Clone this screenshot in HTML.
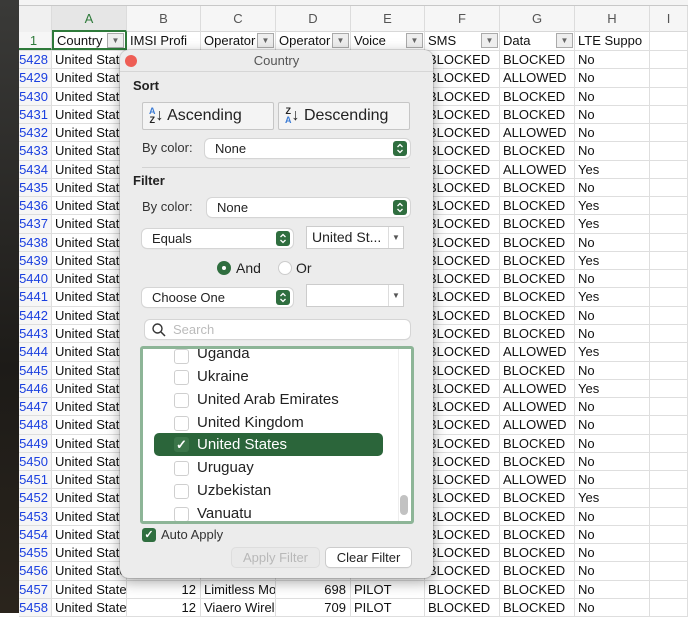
<!DOCTYPE html>
<html><head><meta charset="utf-8"><style>
*{box-sizing:border-box;margin:0;padding:0}
body{width:688px;height:613px;overflow:hidden;background:#fff;font-family:"Liberation Sans",sans-serif;position:relative}
.dark{position:absolute;left:0;top:0;width:19px;height:613px;background:linear-gradient(#3a3a38,#1d1b18 60%,#2a241c)}
.top{position:absolute;left:19px;top:0;width:669px;height:6px;background:#f4f4f4;border-bottom:1px solid #c8c8c8}
.colhdr{position:absolute;left:19px;top:6px;height:26px;width:669px;background:#f6f6f6;border-bottom:1px solid #d8d8d8;display:flex;font-size:13px;color:#555}
.colhdr span{border-right:1px solid #dcdcdc;text-align:center;line-height:26px;height:26px}
.rows{position:absolute;left:19px;top:32px;width:669px}
.r{display:flex;height:18.27px;border-bottom:1px solid #dedede;font-size:13px;line-height:18px;color:#111;white-space:nowrap}
.r span{border-right:1px solid #dedede;overflow:hidden;padding-left:3px;height:100%}
.r span:first-child{color:#1a3fe0;text-align:right;padding-right:3px;background:#f6f6f6;padding-left:0}
.w0{width:33px}.w1{width:75px}.w2{width:74px}.w3{width:75px}.w4{width:75px}.w5{width:74px}.w6{width:75px}.w7{width:75px}.w8{width:75px}.w9{width:38px}
.num{text-align:right;padding-right:4px}
.dd{display:inline-block;float:right;width:17px;height:15px;margin-top:1px;margin-right:1px;border:1px solid #aaa;background:#eee;font-size:8px;line-height:13px;text-align:center;color:#666}
.pop{position:absolute;left:120px;top:50px;width:313px;height:528px;background:#ececec;border-radius:9px;box-shadow:0 4px 14px rgba(0,0,0,.35),0 0 0 1px rgba(0,0,0,.12);font-size:13px;color:#222}
.pop .a{position:absolute}
.sel{position:absolute;background:#fff;border-radius:5px;box-shadow:0 0 0 1px #d5d5d5,0 1px 1px rgba(0,0,0,.1);height:19px;line-height:19px;padding-left:10px;font-size:13px}
.st{position:absolute;right:3px;top:2px;width:14px;height:15px;background:#2f6e3f;border-radius:3px}
.btn{position:absolute;background:#f4f4f4;border:1px solid #c6c6c6;border-radius:2px;font-size:16px;line-height:25px}
.cb{position:absolute;left:31px;width:15px;height:15px;border:1px solid #cfcfcf;border-radius:3px;background:#fff}
.it{position:absolute;left:54px;font-size:15px;color:#222}
</style></head><body>
<div class="dark"></div><div class="top"></div>
<div class="colhdr"><span class="w0" style="background:#f0f0f0"></span><span class="w1" style="color:#2e7a3a;border-bottom:2px solid #2e7a3a;background:#e6e6e6">A</span><span class="w2">B</span><span class="w3">C</span><span class="w4">D</span><span class="w5">E</span><span class="w6">F</span><span class="w7">G</span><span class="w8">H</span><span class="w9">I</span></div>
<div class="rows">
<div class="r" style="height:19px"><span class="w0" style="color:#2e7a3a;text-align:center;border-bottom:2px solid #2e7a3a">1</span><span class="w1" style="border:2px solid #2e7a3a;border-top:none">Country<i class="dd" style="font-style:normal">&#9660;</i></span><span class="w2">IMSI Profi<i class="dd">&#9660;</i></span><span class="w3">Operator<i class="dd">&#9660;</i></span><span class="w4">Operator<i class="dd">&#9660;</i></span><span class="w5">Voice<i class="dd">&#9660;</i></span><span class="w6">SMS<i class="dd">&#9660;</i></span><span class="w7">Data<i class="dd">&#9660;</i></span><span class="w8">LTE Suppo<i class="dd">&#9660;</i></span><span class="w9"></span></div>
<div class="r"><span class="w0">5428</span><span class="w1">United Stat</span><span class="w2"></span><span class="w3"></span><span class="w4"></span><span class="w5"></span><span class="w6">BLOCKED</span><span class="w7">BLOCKED</span><span class="w8">No</span><span class="w9"></span></div>
<div class="r"><span class="w0">5429</span><span class="w1">United Stat</span><span class="w2"></span><span class="w3"></span><span class="w4"></span><span class="w5"></span><span class="w6">BLOCKED</span><span class="w7">ALLOWED</span><span class="w8">No</span><span class="w9"></span></div>
<div class="r"><span class="w0">5430</span><span class="w1">United Stat</span><span class="w2"></span><span class="w3"></span><span class="w4"></span><span class="w5"></span><span class="w6">BLOCKED</span><span class="w7">BLOCKED</span><span class="w8">No</span><span class="w9"></span></div>
<div class="r"><span class="w0">5431</span><span class="w1">United Stat</span><span class="w2"></span><span class="w3"></span><span class="w4"></span><span class="w5"></span><span class="w6">BLOCKED</span><span class="w7">BLOCKED</span><span class="w8">No</span><span class="w9"></span></div>
<div class="r"><span class="w0">5432</span><span class="w1">United Stat</span><span class="w2"></span><span class="w3"></span><span class="w4"></span><span class="w5"></span><span class="w6">BLOCKED</span><span class="w7">ALLOWED</span><span class="w8">No</span><span class="w9"></span></div>
<div class="r"><span class="w0">5433</span><span class="w1">United Stat</span><span class="w2"></span><span class="w3"></span><span class="w4"></span><span class="w5"></span><span class="w6">BLOCKED</span><span class="w7">BLOCKED</span><span class="w8">No</span><span class="w9"></span></div>
<div class="r"><span class="w0">5434</span><span class="w1">United Stat</span><span class="w2"></span><span class="w3"></span><span class="w4"></span><span class="w5"></span><span class="w6">BLOCKED</span><span class="w7">ALLOWED</span><span class="w8">Yes</span><span class="w9"></span></div>
<div class="r"><span class="w0">5435</span><span class="w1">United Stat</span><span class="w2"></span><span class="w3"></span><span class="w4"></span><span class="w5"></span><span class="w6">BLOCKED</span><span class="w7">BLOCKED</span><span class="w8">No</span><span class="w9"></span></div>
<div class="r"><span class="w0">5436</span><span class="w1">United Stat</span><span class="w2"></span><span class="w3"></span><span class="w4"></span><span class="w5"></span><span class="w6">BLOCKED</span><span class="w7">BLOCKED</span><span class="w8">Yes</span><span class="w9"></span></div>
<div class="r"><span class="w0">5437</span><span class="w1">United Stat</span><span class="w2"></span><span class="w3"></span><span class="w4"></span><span class="w5"></span><span class="w6">BLOCKED</span><span class="w7">BLOCKED</span><span class="w8">Yes</span><span class="w9"></span></div>
<div class="r"><span class="w0">5438</span><span class="w1">United Stat</span><span class="w2"></span><span class="w3"></span><span class="w4"></span><span class="w5"></span><span class="w6">BLOCKED</span><span class="w7">BLOCKED</span><span class="w8">No</span><span class="w9"></span></div>
<div class="r"><span class="w0">5439</span><span class="w1">United Stat</span><span class="w2"></span><span class="w3"></span><span class="w4"></span><span class="w5"></span><span class="w6">BLOCKED</span><span class="w7">BLOCKED</span><span class="w8">Yes</span><span class="w9"></span></div>
<div class="r"><span class="w0">5440</span><span class="w1">United Stat</span><span class="w2"></span><span class="w3"></span><span class="w4"></span><span class="w5"></span><span class="w6">BLOCKED</span><span class="w7">BLOCKED</span><span class="w8">No</span><span class="w9"></span></div>
<div class="r"><span class="w0">5441</span><span class="w1">United Stat</span><span class="w2"></span><span class="w3"></span><span class="w4"></span><span class="w5"></span><span class="w6">BLOCKED</span><span class="w7">BLOCKED</span><span class="w8">Yes</span><span class="w9"></span></div>
<div class="r"><span class="w0">5442</span><span class="w1">United Stat</span><span class="w2"></span><span class="w3"></span><span class="w4"></span><span class="w5"></span><span class="w6">BLOCKED</span><span class="w7">BLOCKED</span><span class="w8">No</span><span class="w9"></span></div>
<div class="r"><span class="w0">5443</span><span class="w1">United Stat</span><span class="w2"></span><span class="w3"></span><span class="w4"></span><span class="w5"></span><span class="w6">BLOCKED</span><span class="w7">BLOCKED</span><span class="w8">No</span><span class="w9"></span></div>
<div class="r"><span class="w0">5444</span><span class="w1">United Stat</span><span class="w2"></span><span class="w3"></span><span class="w4"></span><span class="w5"></span><span class="w6">BLOCKED</span><span class="w7">ALLOWED</span><span class="w8">Yes</span><span class="w9"></span></div>
<div class="r"><span class="w0">5445</span><span class="w1">United Stat</span><span class="w2"></span><span class="w3"></span><span class="w4"></span><span class="w5"></span><span class="w6">BLOCKED</span><span class="w7">BLOCKED</span><span class="w8">No</span><span class="w9"></span></div>
<div class="r"><span class="w0">5446</span><span class="w1">United Stat</span><span class="w2"></span><span class="w3"></span><span class="w4"></span><span class="w5"></span><span class="w6">BLOCKED</span><span class="w7">ALLOWED</span><span class="w8">Yes</span><span class="w9"></span></div>
<div class="r"><span class="w0">5447</span><span class="w1">United Stat</span><span class="w2"></span><span class="w3"></span><span class="w4"></span><span class="w5"></span><span class="w6">BLOCKED</span><span class="w7">ALLOWED</span><span class="w8">No</span><span class="w9"></span></div>
<div class="r"><span class="w0">5448</span><span class="w1">United Stat</span><span class="w2"></span><span class="w3"></span><span class="w4"></span><span class="w5"></span><span class="w6">BLOCKED</span><span class="w7">ALLOWED</span><span class="w8">No</span><span class="w9"></span></div>
<div class="r"><span class="w0">5449</span><span class="w1">United Stat</span><span class="w2"></span><span class="w3"></span><span class="w4"></span><span class="w5"></span><span class="w6">BLOCKED</span><span class="w7">BLOCKED</span><span class="w8">No</span><span class="w9"></span></div>
<div class="r"><span class="w0">5450</span><span class="w1">United Stat</span><span class="w2"></span><span class="w3"></span><span class="w4"></span><span class="w5"></span><span class="w6">BLOCKED</span><span class="w7">BLOCKED</span><span class="w8">No</span><span class="w9"></span></div>
<div class="r"><span class="w0">5451</span><span class="w1">United Stat</span><span class="w2"></span><span class="w3"></span><span class="w4"></span><span class="w5"></span><span class="w6">BLOCKED</span><span class="w7">ALLOWED</span><span class="w8">No</span><span class="w9"></span></div>
<div class="r"><span class="w0">5452</span><span class="w1">United Stat</span><span class="w2"></span><span class="w3"></span><span class="w4"></span><span class="w5"></span><span class="w6">BLOCKED</span><span class="w7">BLOCKED</span><span class="w8">Yes</span><span class="w9"></span></div>
<div class="r"><span class="w0">5453</span><span class="w1">United Stat</span><span class="w2"></span><span class="w3"></span><span class="w4"></span><span class="w5"></span><span class="w6">BLOCKED</span><span class="w7">BLOCKED</span><span class="w8">No</span><span class="w9"></span></div>
<div class="r"><span class="w0">5454</span><span class="w1">United Stat</span><span class="w2"></span><span class="w3"></span><span class="w4"></span><span class="w5"></span><span class="w6">BLOCKED</span><span class="w7">BLOCKED</span><span class="w8">No</span><span class="w9"></span></div>
<div class="r"><span class="w0">5455</span><span class="w1">United Stat</span><span class="w2"></span><span class="w3"></span><span class="w4"></span><span class="w5"></span><span class="w6">BLOCKED</span><span class="w7">BLOCKED</span><span class="w8">No</span><span class="w9"></span></div>
<div class="r"><span class="w0">5456</span><span class="w1">United State</span><span class="w2"></span><span class="w3"></span><span class="w4"></span><span class="w5"></span><span class="w6">BLOCKED</span><span class="w7">BLOCKED</span><span class="w8">No</span><span class="w9"></span></div>
<div class="r"><span class="w0">5457</span><span class="w1">United State</span><span class="w2 num">12</span><span class="w3">Limitless Mo</span><span class="w4 num">698</span><span class="w5">PILOT</span><span class="w6">BLOCKED</span><span class="w7">BLOCKED</span><span class="w8">No</span><span class="w9"></span></div>
<div class="r"><span class="w0">5458</span><span class="w1">United State</span><span class="w2 num">12</span><span class="w3">Viaero Wirel</span><span class="w4 num">709</span><span class="w5">PILOT</span><span class="w6">BLOCKED</span><span class="w7">BLOCKED</span><span class="w8">No</span><span class="w9"></span></div>
</div>

<div class="pop">
<div class="a" style="left:5px;top:5px;width:12px;height:12px;border-radius:50%;background:#ee5e55"></div>
<div class="a" style="left:0;width:313px;top:3px;text-align:center;color:#555;font-size:13px">Country</div>
<div class="a" style="left:0;top:21px;width:313px;height:1px;background:#d6d6d6"></div>
<div class="a" style="left:13px;top:28px;font-weight:bold">Sort</div>
<div class="btn" style="left:22px;top:52px;width:132px;height:28px;padding-left:6px"><span style="display:inline-block;font-size:9px;line-height:9px;vertical-align:middle;font-weight:bold;text-align:center"><span style="color:#3b7bd5">A</span><br>Z</span>&#8595; Ascending</div>
<div class="btn" style="left:158px;top:52px;width:132px;height:28px;padding-left:6px"><span style="display:inline-block;font-size:9px;line-height:9px;vertical-align:middle;font-weight:bold;text-align:center">Z<br><span style="color:#3b7bd5">A</span></span>&#8595; Descending</div>
<div class="a" style="left:22px;top:90px;color:#333">By color:</div>
<div class="sel" style="left:85px;top:89px;width:205px">None<div class="st"><svg width="14" height="15"><path d="M4.5 6 L7 3.5 L9.5 6 M4.5 9 L7 11.5 L9.5 9" fill="none" stroke="#fff" stroke-width="1.3"/></svg></div></div>
<div class="a" style="left:22px;top:117px;width:268px;height:1px;background:#d2d2d2"></div>
<div class="a" style="left:13px;top:123px;font-weight:bold">Filter</div>
<div class="a" style="left:22px;top:149px;color:#333">By color:</div>
<div class="sel" style="left:87px;top:148px;width:203px">None<div class="st"><svg width="14" height="15"><path d="M4.5 6 L7 3.5 L9.5 6 M4.5 9 L7 11.5 L9.5 9" fill="none" stroke="#fff" stroke-width="1.3"/></svg></div></div>
<div class="sel" style="left:22px;top:179px;width:151px">Equals<div class="st"><svg width="14" height="15"><path d="M4.5 6 L7 3.5 L9.5 6 M4.5 9 L7 11.5 L9.5 9" fill="none" stroke="#fff" stroke-width="1.3"/></svg></div></div>
<div class="a" style="left:186px;top:176px;width:98px;height:23px;background:#fff;border:1px solid #ccc;font-size:14px;line-height:21px;padding-left:5px">United St...<span style="position:absolute;right:0;top:0;width:15px;height:21px;border-left:1px solid #ddd;font-size:8px;text-align:center;color:#555">&#9660;</span></div>
<div class="a" style="left:97px;top:211px;width:14px;height:14px;border-radius:50%;background:#2f6e3f"><div style="margin:5px;width:4px;height:4px;border-radius:50%;background:#fff"></div></div>
<div class="a" style="left:116px;top:210px;font-size:14px">And</div>
<div class="a" style="left:158px;top:211px;width:14px;height:14px;border-radius:50%;background:#fff;border:1px solid #ccc"></div>
<div class="a" style="left:176px;top:210px;font-size:14px">Or</div>
<div class="sel" style="left:22px;top:238px;width:151px">Choose One<div class="st"><svg width="14" height="15"><path d="M4.5 6 L7 3.5 L9.5 6 M4.5 9 L7 11.5 L9.5 9" fill="none" stroke="#fff" stroke-width="1.3"/></svg></div></div>
<div class="a" style="left:186px;top:234px;width:98px;height:23px;background:#fff;border:1px solid #ccc"><span style="position:absolute;right:0;top:0;width:15px;height:21px;border-left:1px solid #ddd;font-size:8px;text-align:center;color:#555;line-height:21px">&#9660;</span></div>
<div class="sel" style="left:25px;top:270px;width:265px;color:#bbb;padding-left:28px">Search<svg style="position:absolute;left:7px;top:3px" width="14" height="14"><circle cx="5.5" cy="5.5" r="4.5" fill="none" stroke="#333" stroke-width="1.4"/><line x1="9" y1="9" x2="13" y2="13" stroke="#333" stroke-width="1.5"/></svg></div>
<div class="a" style="left:20px;top:296px;width:274px;height:178px;border:3px solid #8db597;border-radius:3px;background:#fff;overflow:hidden">
<div class="a" style="left:255px;top:0;width:1px;height:172px;background:#eee"></div>
<div class="a" style="left:257px;top:146px;width:8px;height:20px;border-radius:4px;background:#c2c2c2"></div>
<div class="cb" style="top:0"></div><div class="it" style="top:-4px">Uganda</div>
<div class="cb" style="top:21px"></div><div class="it" style="top:19px">Ukraine</div>
<div class="cb" style="top:44px"></div><div class="it" style="top:42px">United Arab Emirates</div>
<div class="cb" style="top:67px"></div><div class="it" style="top:65px">United Kingdom</div>
<div class="a" style="left:11px;top:84px;width:229px;height:23px;background:#2b653a;border-radius:5px"></div>
<div class="cb" style="top:88px;background:#3b7549;border-color:#3b7549;color:#fff;font-size:13px;line-height:13px;text-align:center;font-weight:bold">&#10003;</div><div class="it" style="top:87px;color:#fff">United States</div>
<div class="cb" style="top:112px"></div><div class="it" style="top:110px">Uruguay</div>
<div class="cb" style="top:135px"></div><div class="it" style="top:133px">Uzbekistan</div>
<div class="cb" style="top:158px"></div><div class="it" style="top:156px">Vanuatu</div>
</div>
<div class="a" style="left:22px;top:478px;width:14px;height:14px;border-radius:3px;background:#2f6e3f;color:#fff;font-size:11px;line-height:14px;text-align:center;font-weight:bold">&#10003;</div>
<div class="a" style="left:41px;top:477px;color:#333">Auto Apply</div>
<div class="a" style="left:112px;top:498px;width:87px;height:19px;border-radius:4px;background:#e9e9e9;box-shadow:0 0 0 1px #ddd;color:#b8b8b8;text-align:center;line-height:19px">Apply Filter</div>
<div class="a" style="left:206px;top:498px;width:85px;height:19px;border-radius:4px;background:#fff;box-shadow:0 0 0 1px #ccc,0 1px 1px rgba(0,0,0,.15);text-align:center;line-height:19px">Clear Filter</div>
</div>
</body></html>
